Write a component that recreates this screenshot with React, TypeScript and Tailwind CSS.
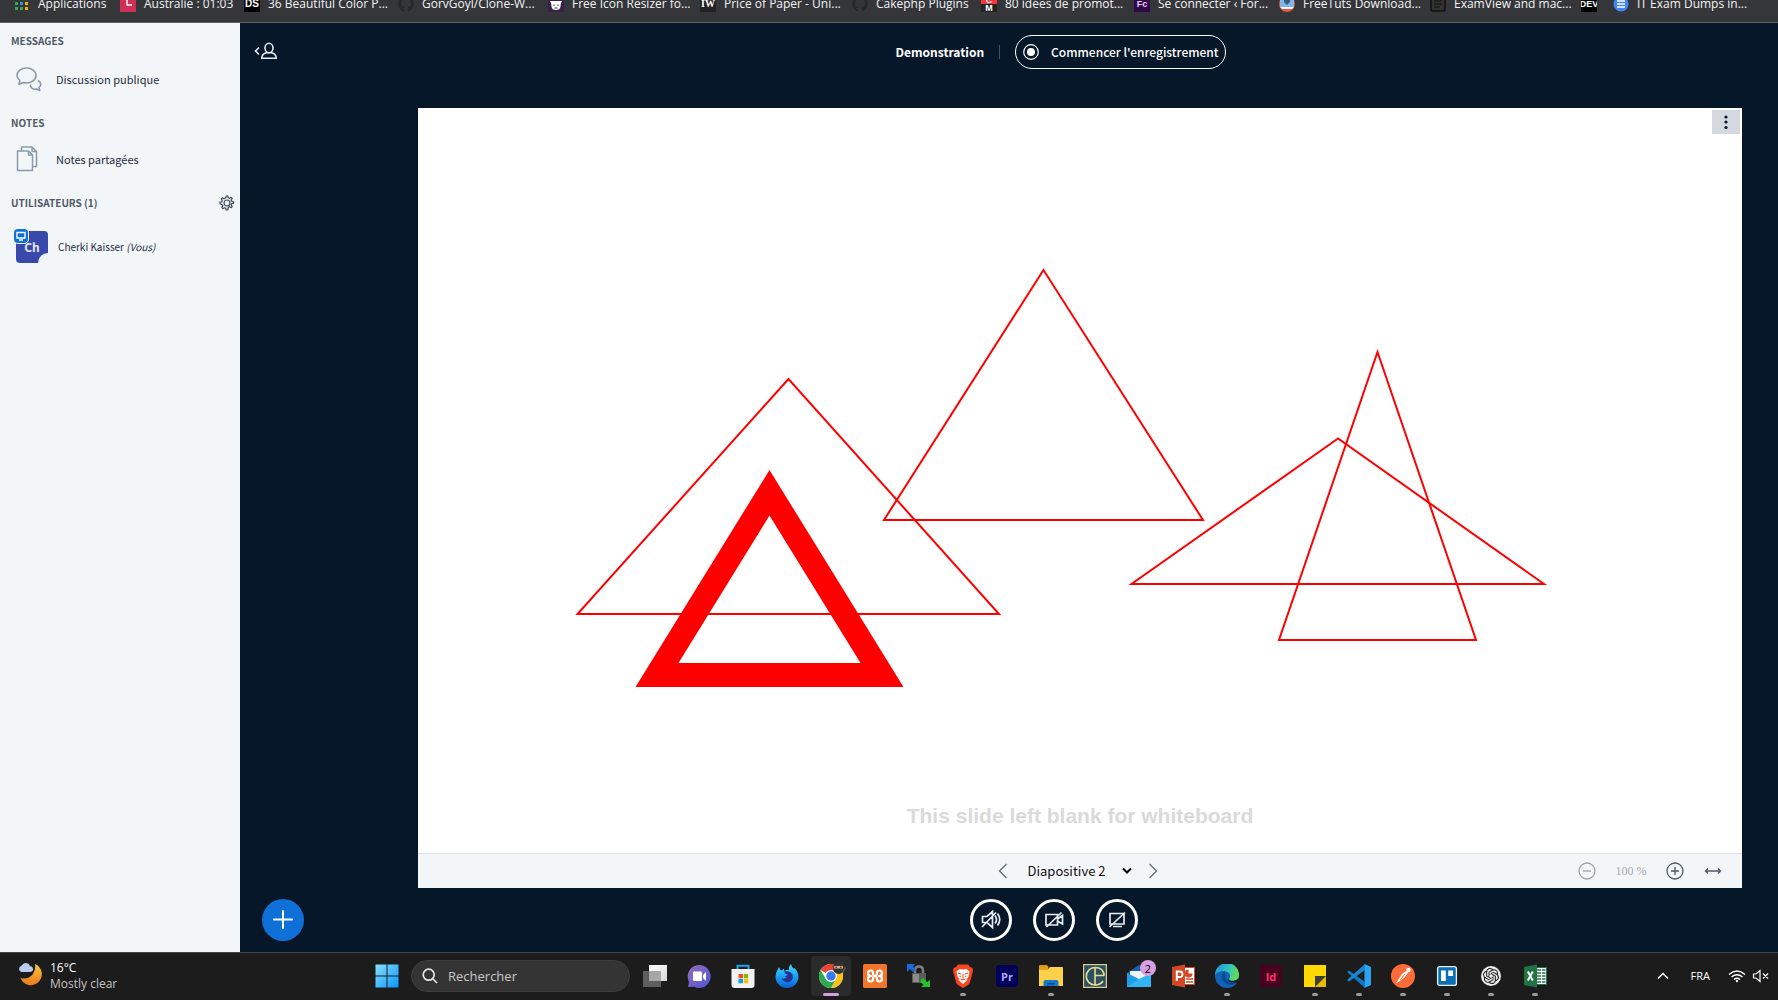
import type { ReactNode } from "react";
import { FaGithub } from "react-icons/fa";
import { SiOpenai } from "react-icons/si";

const UI = "font-['Noto_Sans_CJK_SC',sans-serif]";

const tile = "flex size-4 shrink-0 items-center justify-center overflow-hidden text-[9px] font-bold leading-none";

const AppsIcon = () => (
  <svg viewBox="0 0 16 16" className="size-4 shrink-0">
    {["#e94235", "#e94235", "#fbbc04", "#34a853", "#1a9cf0", "#f9ab00", "#34a853", "#34a853", "#f9ab00"].map((c, i) => (
      <rect key={i} x={(i % 3) * 5 + 1} y={Math.floor(i / 3) * 5 + 1} width="3" height="3" fill={c} />
    ))}
  </svg>
);

const bookmarks: { w: string; icon: ReactNode; label: string }[] = [
  { w: "w-[106px]", icon: <AppsIcon />, label: "Applications" },
  {
    w: "w-[124px]",
    icon: (
      <svg viewBox="0 0 16 16" className="size-4 shrink-0">
        <rect width="16" height="16" fill="#cf3057" />
        <path d="M7 2v7h5" fill="none" stroke="#fff" strokeWidth="1.4" />
      </svg>
    ),
    label: "Australie : 01:03",
  },
  { w: "w-[154px]", icon: <span className={tile + " bg-black text-[10px] text-white font-['Liberation_Sans',sans-serif]"}>DS</span>, label: "36 Beautiful Color P..." },
  { w: "w-[150px]", icon: <FaGithub className="size-4 shrink-0 text-[#24292e]" />, label: "GorvGoyl/Clone-W..." },
  {
    w: "w-[152px]",
    icon: (
      <svg viewBox="0 0 16 16" className="size-4 shrink-0">
        <rect width="16" height="16" fill="#36204a" />
        <path d="M2 5h12l-1 2-.6 4Q12 14 8 14T3.600 11L3 7z" fill="#fff" />
        <path d="M6 8.500v1.500M10 8.500v1.500M6.500 12h3" stroke="#36204a" />
      </svg>
    ),
    label: "Free Icon Resizer fo...",
  },
  { w: "w-[152px]", icon: <span className={tile + " bg-[#222] text-[10px] text-white font-['Liberation_Serif',serif]"}>IW</span>, label: "Price of Paper - Uni..." },
  { w: "w-[129px]", icon: <FaGithub className="size-4 shrink-0 text-[#24292e]" />, label: "Cakephp Plugins" },
  {
    w: "w-[153px]",
    icon: (
      <span className={tile + " flex-col font-['Liberation_Sans',sans-serif] text-white"}>
        <span className="flex h-2 w-4 items-center justify-center bg-[#f8353a]">C</span>
        <span className="flex h-2 w-4 items-center justify-center bg-[#222]">M</span>
      </span>
    ),
    label: "80 idées de promot...",
  },
  {
    w: "w-[145px]",
    icon: (
      <span className={tile + " bg-[#2e0a4a] text-[#eec9f5] font-['Liberation_Sans',sans-serif]"}>Fc</span>
    ),
    label: "Se connecter ‹ For...",
  },
  {
    w: "w-[151px]",
    icon: (
      <svg viewBox="0 0 16 16" className="size-4 shrink-0">
        <circle cx="8" cy="8" r="8" fill="#e2593a" />
        <path d="M1 2h14v9H1z" fill="#7db8e8" />
        <path d="M1 11h14l-2 2H3z" fill="#f5f5f5" />
        <path d="M5 2h6v4L8 9 5 6z" fill="#3d5a80" />
      </svg>
    ),
    label: "FreeTuts Download...",
  },
  {
    w: "w-[151px]",
    icon: (
      <svg viewBox="0 0 16 16" className="size-4 shrink-0">
        <rect x="1" y="1" width="14" height="14" rx="1" fill="#333" stroke="#111" strokeWidth="1.500" />
        <path d="M4 5h8M4 8h8M4 11h6" stroke="#111" strokeWidth="1.200" />
      </svg>
    ),
    label: "ExamView and mac...",
  },
  { w: "w-[32px]", icon: <span className={tile + " bg-black text-[8px] text-white font-['Liberation_Sans',sans-serif]"}>DEV</span>, label: "" },
  {
    w: "w-[140px]",
    icon: (
      <svg viewBox="0 0 16 16" className="size-4 shrink-0">
        <circle cx="8" cy="8" r="7.500" fill="#4285f4" />
        <path d="M4 5h8M4 8h8M4 11h8" stroke="#fff" strokeWidth="1.600" />
      </svg>
    ),
    label: "IT Exam Dumps in...",
  },
];

function BookmarksBar() {
  return (
    <nav aria-label="Favoris" className="flex h-[23px] shrink-0 items-start overflow-hidden border-b border-[#5f6063] bg-[#35363a] pl-[14px]">
      {bookmarks.map((b, i) => (
        <a key={i} href="#" className={"-mt-1 flex h-4 shrink-0 items-center gap-2 whitespace-nowrap text-xs leading-4 text-[#f1f3f4] " + b.w}>
          {b.icon}
          {b.label && <span className="font-['Open_Sans',sans-serif]">{b.label}</span>}
        </a>
      ))}
    </nav>
  );
}

function SectionTitle({ children }: { children: ReactNode }) {
  return <h2 className="text-[10px] font-bold leading-4 text-[#4e5a66]">{children}</h2>;
}

function Sidebar() {
  return (
    <aside className="flex w-60 shrink-0 flex-col bg-[#f3f6f9] px-[11px] pt-[10px] text-[#1f2d3d]">
      <SectionTitle>MESSAGES</SectionTitle>
      <button className="mt-[14px] flex h-8 items-center gap-[14px] pl-[5px] text-left text-[11px] leading-4">
        <svg viewBox="0 0 26 26" className="size-[26px]" fill="none" stroke="#8b9aaa" strokeWidth="1.600" strokeLinejoin="round">
          <path d="M10.500 2C15.500 2 20 5 20 9.500S15.500 17 10.500 17q-2 0-3.500-.5L3 18.500l.8-4Q1 12 1 9.500C1 5 5.500 2 10.500 2z" />
          <path d="M22 14.500c3.500 2 3.500 5 1 7l.8 3-3.300-1.500c-3 .8-6.500-1-6-4.500" />
        </svg>
        Discussion publique
      </button>
      <div className="mt-5">
        <SectionTitle>NOTES</SectionTitle>
      </div>
      <button className="mt-3 flex h-8 items-center gap-[14px] pl-[5px] text-left text-[11px] leading-4">
        <svg viewBox="0 0 26 26" className="size-[26px]" fill="none" stroke="#8b9aaa" strokeWidth="1.500" strokeLinejoin="round">
          <path d="M1.500 5h11l4 4v15.500h-15z" />
          <path d="M12.500 5v4h4M5.500 5V1h10.500l4.500 4.500v15h-4M16 1v4.500h4.500" />
        </svg>
        Notes partagées
      </button>
      <div className="mt-5 flex items-center justify-between">
        <SectionTitle>UTILISATEURS (1)</SectionTitle>
        <button aria-label="Gérer les utilisateurs" className="-mr-[6px]">
          <svg viewBox="0 0 16 16" className="size-4" fill="none" stroke="#3b4a59" strokeWidth="1.200" strokeLinejoin="round">
            <path d="M6.800 2.800 7.200 1h1.600l.4 1.800 1.300.5 1.600-1 1.100 1.100-1 1.600.5 1.300 1.800.4v1.600l-1.800.4-.5 1.300 1 1.600-1.100 1.100-1.600-1-1.300.5L8.800 15H7.200l-.4-1.800-1.300-.5-1.600 1-1.100-1.100 1-1.600-.5-1.300L1 8.800V7.200l1.800-.4.5-1.300-1-1.600 1.100-1.100 1.600 1z" />
            <circle cx="8" cy="8" r="3" />
          </svg>
        </button>
      </div>
      <div className="mt-5 flex items-center gap-[10px] pl-[5px]">
        <div className="relative flex size-8 items-center justify-center rounded bg-[#3949ab] text-[12px] font-bold leading-4 text-[#e8eaf8]">
          Ch
          <span className="absolute -left-[2px] -top-[2px] flex size-[14px] items-center justify-center rounded bg-[#0f70d7] ring-1 ring-[#f3f6f9]">
            <svg viewBox="0 0 12 12" className="size-3" fill="none" stroke="#fff" strokeWidth="1.400">
              <path d="M2 2.500h8v5.500H2zM4 10h4" />
            </svg>
          </span>
          <span className="absolute bottom-0 right-0 size-[10px] rounded-tl-full bg-[#f3f6f9]" />
        </div>
        <span className="text-[10px] leading-4">
          Cherki Kaisser <em>(Vous)</em>
        </span>
      </div>
    </aside>
  );
}

function TopBar() {
  return (
    <header className="grid h-[58px] grid-cols-[1fr_auto_1fr] items-center px-[14px] text-white">
      <button aria-label="Afficher les utilisateurs" className="justify-self-start pb-[2px]">
        <svg viewBox="0 0 24 18" className="h-[18px] w-6" fill="none" stroke="#e6ecf2" strokeWidth="1.600">
          <path d="M5 5.500 1.500 9 5 12.500" />
          <ellipse cx="15" cy="6" rx="4" ry="4.700" />
          <path d="M7.800 16.200q0-4.200 4.400-5.400h5.600q4.400 1.200 4.400 5.400z" />
        </svg>
      </button>
      <div className="flex items-center pl-[103px]">
        <h1 className="text-[12px] font-bold leading-5">Demonstration</h1>
        <span className="ml-[15px] mr-[15px] h-[14px] w-px bg-[#44515f]" />
        <button className="flex h-[34px] items-center gap-3 whitespace-nowrap rounded-full border border-white pl-[7px] pr-[6px] text-[12px] font-medium leading-5">
          <svg viewBox="0 0 16 16" className="size-4">
            <circle cx="8" cy="8" r="7.300" fill="none" stroke="#fff" strokeWidth="1.200" />
            <circle cx="8" cy="8" r="4" fill="#fff" />
          </svg>
          Commencer l'enregistrement
        </button>
      </div>
    </header>
  );
}

function Whiteboard() {
  return (
    <section className="relative flex flex-1 flex-col bg-white">
      <div className="relative flex flex-1 items-end justify-center pb-[25px]">
        <svg viewBox="0 0 1324 745" className="absolute inset-0 size-full" fill="none" stroke="#f00" strokeWidth="2">
          <path d="M370.500 271 159.500 506H581z" />
          <path d="M625.500 162 466 412H785z" />
          <path d="M920 330.500 713.500 476H1126z" />
          <path d="M959.500 244 861 532H1058z" />
          <path d="M351.500 362 217.500 579H485.500zM351.500 407.500 442.500 555H260.500z" fill="#f00" stroke="none" fillRule="evenodd" />
        </svg>
        <p className="font-['Liberation_Sans',sans-serif] text-[21px] font-bold leading-6 text-[#dadada]">This slide left blank for whiteboard</p>
      </div>
      <button aria-label="Options" className="absolute right-[2px] top-[2px] flex h-6 w-7 items-center justify-center bg-[#d4d9e0]">
        <svg viewBox="0 0 4 16" className="h-4 w-1" fill="#06172a">
          <circle cx="2" cy="3" r="1.600" />
          <circle cx="2" cy="8" r="1.600" />
          <circle cx="2" cy="13.500" r="1.600" />
        </svg>
      </button>
      <div className="grid h-[35px] grid-cols-[1fr_auto_1fr] items-center border-t border-[#dfe4e9] bg-[#f3f6f9]">
        <div className="col-start-2 flex items-center pr-[5px]">
          <button aria-label="Diapositive précédente">
            <svg viewBox="0 0 10 16" className="h-4 w-[10px]" fill="none" stroke="#5f6d7a" strokeWidth="1.300"><path d="M8.500 1 1.500 8l7 7" /></svg>
          </button>
          <label className="relative ml-5 mr-4 flex items-center">
            <select aria-label="Diapositive" className="w-[104px] appearance-none bg-transparent text-[13px] leading-5 text-[#111] outline-none">
              <option>Diapositive 2</option>
            </select>
            <svg viewBox="0 0 10 8" className="pointer-events-none absolute right-0 h-2 w-[10px]" fill="none" stroke="#000" strokeWidth="2"><path d="m1 1.500 4 4 4-4" /></svg>
          </label>
          <button aria-label="Diapositive suivante">
            <svg viewBox="0 0 10 16" className="h-4 w-[10px]" fill="none" stroke="#5f6d7a" strokeWidth="1.300"><path d="m1.500 1 7 7-7 7" /></svg>
          </button>
        </div>
        <div className="flex items-center justify-end pr-5">
          <button aria-label="Zoom arrière">
            <svg viewBox="0 0 18 18" className="size-[18px]" fill="none" stroke="#9aa2ab" strokeWidth="1.300"><circle cx="9" cy="9" r="8" /><path d="M5 9h8" /></svg>
          </button>
          <span className="w-[70px] text-center font-['Liberation_Serif',serif] text-[12px] leading-4 text-[#a3a9b0]">100 %</span>
          <button aria-label="Zoom avant">
            <svg viewBox="0 0 18 18" className="size-[18px]" fill="none" stroke="#4e5a66" strokeWidth="1.300"><circle cx="9" cy="9" r="8" /><path d="M5 9h8M9 5v8" /></svg>
          </button>
          <button aria-label="Ajuster à la largeur" className="ml-5">
            <svg viewBox="0 0 18 10" className="h-[10px] w-[18px]" fill="none" stroke="#4e5a66" strokeWidth="1.400"><path d="M1.500 5h15M4 2.500 1.500 5 4 7.500M14 2.500 16.500 5 14 7.500" /></svg>
          </button>
        </div>
      </div>
    </section>
  );
}

function RoundButton({ label, children }: { label: string; children: ReactNode }) {
  return (
    <button aria-label={label} className="flex size-[42px] items-center justify-center rounded-full border-[3px] border-white">
      <svg viewBox="0 0 20 20" className="size-5" fill="none" stroke="#e6ecf2" strokeWidth="1.700">{children}</svg>
    </button>
  );
}

function ActionsBar() {
  return (
    <footer className="grid h-16 grid-cols-[1fr_auto_1fr] items-center pl-[22px] pr-[22px]">
      <button aria-label="Actions" className="flex size-[42px] items-center justify-center rounded-full bg-[#0f70d7]">
        <svg viewBox="0 0 20 20" className="size-5" stroke="#fff" strokeWidth="2" strokeLinecap="round"><path d="M10 1v17M1 9.500h18" /></svg>
      </button>
      <div className="flex gap-[21px] pl-[90px]">
        <RoundButton label="Rejoindre l'audio">
          <path d="M1.500 6.500H6L11.500 1.500v16L6 12.500H1.500zM14 5.500q3 4 0 8M16.500 3.500q4.500 6 0 12M1 17 15 2.500" />
        </RoundButton>
        <RoundButton label="Partager la webcam">
          <path d="M2 4.500h11.500v10.500H2zM13.500 9 18.500 5.500v8.500L13.500 11M2.500 17 17.500 2.500" />
        </RoundButton>
        <RoundButton label="Partager l'écran">
          <path d="M3 3.500h14v10.500H3zM6 16.500h9M2.500 17 18 2.500" />
        </RoundButton>
      </div>
    </footer>
  );
}

const Badge = ({ children, cls }: { children: ReactNode; cls: string }) => (
  <span className={"flex size-[22px] items-center justify-center rounded font-['Open_Sans',sans-serif] text-[11px] font-bold leading-none " + cls}>{children}</span>
);

const Svg = ({ children }: { children: ReactNode }) => (
  <svg viewBox="0 0 24 24" className="size-6">{children}</svg>
);

const ChromeIcon = () => (
  <Svg>
    <circle cx="12" cy="12" r="12" fill="#fff" />
    <path d="M12 12 1.600 6A12 12 0 0 1 22.400 6H12z" fill="#ea4335" />
    <path d="M22.400 6A12 12 0 0 1 12 24l5.200-9L12 6z" fill="#fbc116" />
    <path d="M12 24A12 12 0 0 1 1.600 6l5.200 9L12 18l5-3z" fill="#2da94f" />
    <circle cx="12" cy="12" r="6" fill="#fff" />
    <circle cx="12" cy="12" r="4.700" fill="#3a7af0" />
  </Svg>
);

const apps: { name: string; state?: "run" | "active"; icon: ReactNode }[] = [
  { name: "Vue des tâches", icon: <Svg><defs><linearGradient id="tv" x2="1" y2="1"><stop stopColor="#fff" /><stop offset="1" stopColor="#d8d8d8" /></linearGradient></defs><path d="M6 1h18v16H6z" fill="url(#tv)" /><path d="M0 7h18v16H0z" fill="#5e5e5e" /><path d="M6 7h12v10H6z" fill="#a6a6a6" /></Svg> },
  { name: "Conversation", icon: <Svg><defs><linearGradient id="ct" x2="1" y2="1"><stop stopColor="#9a6fb8" /><stop offset="1" stopColor="#4b53d8" /></linearGradient></defs><path d="M12 1a11.500 11.500 0 1 1-5 21.800L1 23l1-5A11.500 11.500 0 0 1 12 1z" fill="url(#ct)" /><rect x="6" y="7.500" width="9" height="9.500" rx="1" fill="#fff" /><path d="m16 11 3-3v9l-3-3z" fill="#fff" /></Svg> },
  { name: "Microsoft Store", icon: <Svg><path d="M6.500 6V1.800h11V6" fill="none" stroke="#1ba1e8" strokeWidth="2" /><path d="M.500 5h23v16q0 3-3 3h-17q-3 0-3-3z" fill="#f2f2f2" /><path d="M7.500 10H12v4.300H7.500z" fill="#f25022" /><path d="M12.800 10h4.300v4.300h-4.300z" fill="#7fba00" /><path d="M7.500 15H12v4.300H7.500z" fill="#00a4ef" /><path d="M12.800 15h4.300v4.300h-4.300z" fill="#ffb900" /></Svg> },
  { name: "Firefox Developer Edition", icon: <Svg><defs><linearGradient id="ff" x2="0" y2="1"><stop stopColor="#3fdcff" /><stop offset=".5" stopColor="#1aa2f8" /><stop offset="1" stopColor="#0a5fd0" /></linearGradient></defs><path d="M2.500 6 4 3l1.500 3 1.500.3L9 4.500V7q3-1.500 5-1.200-.5-3.500 2-5.500.5 3 3 4.500l.5-.8Q23.500 8 23.500 12.800A11.500 11.200 0 0 1 .500 12.800Q.500 9 2.500 6z" fill="url(#ff)" /><path d="M9 7.500q6-1.500 8.500 3 1.500 5-3 7.500-6 1-8-4 3 1.500 5.500-.5-2-.5-2-1.500 2.500 0 2.500-1.500-2.500-.5-3.500-3z" fill="#29308f" /></Svg> },
  { name: "Google Chrome", state: "active", icon: <span className="relative"><ChromeIcon /><svg viewBox="0 0 14 14" className="absolute -right-[3px] -top-[3px] size-[14px]"><path d="M1 6q0-5 5.500-5T12 6q0 7-5.500 7T1 6z" fill="#333" /><path d="M2 5h9v2.500H2z" fill="#e2aa88" /><path d="M3.500 6.200h1.500M8 6.200h1.500" stroke="#111" /><path d="m11 11 3-5" stroke="#555" strokeWidth="1.500" /></svg></span> },
  { name: "XAMPP", icon: <Svg><rect width="24" height="24" rx="1.500" fill="#f0762b" /><path d="M8 6.500q-3 0-3 2.700T8 12q-3 0-3 2.800t3 2.700q2 0 2-2.500 0-3 2-3t2 3q0 2.500 2 2.500 3 0 3-2.700T16 12q3 0 3-2.800t-3-2.700q-2 0-2 2.500 0 3-2 3t-2-3q0-2.500-2-2.500z" fill="none" stroke="#fff" strokeWidth="2.200" strokeLinejoin="round" /></Svg> },
  { name: "WinSCP", icon: <Svg><path d="M8 10V6.500q0-4 4-4t4 4V10" fill="none" stroke="#7d7d7d" strokeWidth="2.500" /><rect x="5" y="9" width="14" height="10" rx="1" fill="#5b5b5b" /><rect x="6" y="10" width="6" height="8" fill="#8b8b8b" /><path d="M0 0h8L6 2.500 9 6 6 8 3 5 0 8z" fill="#1667e0" /><path d="m14 15 2-1 4 4 3-2v7h-9l2.500-2-3-3z" fill="#25c22c" /></Svg> },
  { name: "Brave", state: "run", icon: <Svg><path d="M7 .500h10l2 2.500 2.500 1 .5 3-1 3.500-2 7.500q-.5 2-2 3L12 24l-5-3q-1.500-1-2-3l-2-7.500L2 7l.5-3L5 3z" fill="#fb4420" /><path d="m5.500 7.500 3-2.500 3.500.6L15.500 5l3 2.500-1 5-2 3 1 .5-4.500 4-4.500-4 1-.5-2-3z" fill="#fff" /><path d="m7 9 3 1M17 9l-3 1M12 10v4.500M9.500 15l2.500 1 2.500-1M8.500 12l1.500.500M15.500 12l-1.500.500" stroke="#fb4420" strokeWidth="1.100" fill="none" /></Svg> },
  { name: "Premiere Pro", icon: <Badge cls="bg-[#00005b] text-[#b0a8ff]">Pr</Badge> },
  { name: "Explorateur", state: "run", icon: <Svg><path d="M0 2q0-1 1-1h7l2 2.500H0z" fill="#d99a10" /><path d="M0 5h9l2-2h12q1 0 1 1v18H0z" fill="#ffd04a" /><path d="M0 3h9v3H0z" fill="#e2a51a" /><path d="M4.500 22v-4q0-2 2-2h11q2 0 2 2v4z" fill="#1979c9" /><path d="M8 19h8v1.500H8z" fill="#0b4f8e" /></Svg> },
  { name: "Calligraphie", icon: <Svg><rect x=".600" y=".600" width="22.800" height="22.800" fill="#2c5060" stroke="#d9cf8a" strokeWidth="1.200" /><path d="M12 3.500a8.700 8.700 0 0 0 0 17.500M12 11.500h9.200M12 3v18M12 3.500q8.500 0 9.200 8M12 21q5.500 0 8-4" fill="none" stroke="#e8dd98" strokeWidth="1.600" /></Svg> },
  { name: "Courrier", icon: <span className="relative"><svg viewBox="0 0 24 24" className="size-6"><path d="M0 9 12 1l12 8v4H0z" fill="#1660b5" /><path d="M3 7h18v8l-9 4-9-4z" fill="#f3f3f3" /><path d="M0 9v14h24L12 15z" fill="#1f9ee8" /><path d="M24 9v14H0L12 15z" fill="#32b6f3" /></svg><span className="absolute -right-[5px] -top-1 flex size-4 items-center justify-center rounded-full bg-[#d8a0e2] font-['Open_Sans',sans-serif] text-[11px] leading-none text-black">2</span></span> },
  { name: "PowerPoint", icon: <Svg><path d="M13 3.500h10.500v17H13z" fill="#fff" stroke="#d24726" /><path d="M15 15h7M15 18h7" stroke="#d24726" strokeWidth="1.500" /><path d="M17.500 5.500v4h4a4 4 0 1 1-4-4z" fill="#d24726" /><path d="M1 3 14 .500v23L1 21z" fill="#d24726" /><path d="M5.800 17V7.500h3q2.700 0 2.700 2.800T8.600 13H6" stroke="#fff" strokeWidth="2" fill="none" /></Svg> },
  { name: "Edge", state: "run", icon: <Svg><defs><linearGradient id="eg" x2="1" y2=".3"><stop stopColor="#1a8fd8" /><stop offset=".6" stopColor="#2fc3c4" /><stop offset="1" stopColor="#66d85a" /></linearGradient></defs><circle cx="12" cy="12" r="12" fill="#1262b8" /><path d="M0 11A12 12 0 0 1 24 11q0 5-5 5.500-5 .5-5-1.500 1.500-2 1-4-1-3.500-6-4Q3 7 0 11z" fill="url(#eg)" /><path d="M9 7q-3 3-2 7.500 2 6 9 6.500 3.500-.5 6-3.500-4 1.500-8 0-5-2.500-3.500-7.500Q9 9 9 7z" fill="#0c4a94" /><path d="M14 15q0 2 3.500 2 4 0 5.800-2.500L23 19l-4-.5q-5 0-6-3z" fill="#1c1c1c" /></Svg> },
  { name: "InDesign", icon: <Badge cls="bg-[#49021f] text-[#ff3366]">Id</Badge> },
  { name: "Pense-bêtes", state: "run", icon: <Svg><path d="M1 1h22v11L12 23H1z" fill="#ffd800" /><path d="M12 12h11v11H12z" fill="#e8bd00" /><path d="M12 12h11L12 23z" fill="#3c3c3c" /></Svg> },
  { name: "Visual Studio Code", state: "run", icon: <Svg><path d="M17.500 0 24 3v18l-6.500 3z" fill="#2aa4ee" /><path d="M0 8l2-1.500L18 18v6z" fill="#1179c4" /><path d="M0 16l2 1.500L18 6V0z" fill="#1a86d2" /></Svg> },
  { name: "Postman", state: "run", icon: <Svg><circle cx="12" cy="12" r="12" fill="#ff6c37" /><path d="m5 19 6-9 4-3 2 1.500-3 4.500-8 6z" fill="#fff" /><circle cx="17.500" cy="6" r="2.200" fill="#fff" /><path d="m9 16 5-6" stroke="#ff6c37" /></Svg> },
  { name: "Trello", state: "run", icon: <Svg><rect x="2.600" y="2.600" width="18.800" height="18.800" rx="2" fill="#0b6fb8" stroke="#e8f1f8" strokeWidth="1.300" /><path d="M6 6.500h4.800v10.500H6zM13.200 6.500H18v5.500h-4.800z" fill="#fff" /></Svg> },
  { name: "ChatGPT", state: "run", icon: <span className="flex size-5 items-center justify-center rounded-full bg-[#ececec]"><SiOpenai className="size-4 text-[#222]" /></span> },
  { name: "Excel", state: "run", icon: <Svg><path d="M13 3.500h10.500v17H13z" fill="#fff" stroke="#217346" /><path d="M14 6h4M14 9h4M14 12h4M14 15h4M14 18h4M19 6h3.500M19 9h3.500M19 12h3.500M19 15h3.500M19 18h3.500" stroke="#217346" strokeWidth="1.500" /><path d="M1 3 14 .500v23L1 21z" fill="#217346" /><path d="m4.800 7.500 5 9M9.800 7.500l-5 9" stroke="#fff" strokeWidth="1.900" /></Svg> },
];

function Taskbar() {
  return (
    <div className="flex h-12 shrink-0 items-center border-t border-[#444] bg-[#1c1c1c] pb-px font-['Open_Sans',sans-serif] text-[12px] text-white">
      <div className="flex flex-1 items-center gap-2 pl-[18px]">
        <svg viewBox="0 0 24 24" className="mb-1 size-6">
          <defs><linearGradient id="mn" x2="0" y2="1"><stop stopColor="#f8c83c" /><stop offset="1" stopColor="#ee7a1c" /></linearGradient></defs>
          <path d="M17 2a11 11 0 1 1-14.500 14Q10 18 15 12q3-5 2-10z" fill="url(#mn)" />
          <path d="M3.500 10a3.200 3.200 0 0 1 0-6.200Q5 .800 8 1t4 3q3 .5 3 3.200T12 10z" fill="#b9cbf0" />
        </svg>
        <p className="leading-4">16°C<br /><span className="text-[#c4c4c4]">Mostly clear</span></p>
      </div>
      <button aria-label="Démarrer" className="mr-3">
        <svg viewBox="0 0 24 24" className="size-6">
          <defs><linearGradient id="wn" gradientUnits="userSpaceOnUse" x1="0" y1="0" x2="24" y2="24"><stop stopColor="#8be0fd" /><stop offset="1" stopColor="#0594ff" /></linearGradient></defs>
          <path d="M.500.500h11v11H.500zM12.500.500h11v11h-11zM.500 12.500h11v11H.500zM12.500 12.500h11v11h-11z" fill="url(#wn)" />
        </svg>
      </button>
      <label className="mr-[3px] flex h-8 w-[219px] items-center gap-[10px] rounded-full border border-[#3d3d3d] bg-[#343434] pl-[10px]">
        <svg viewBox="0 0 16 16" className="size-4 shrink-0" fill="none" stroke="#e4e4e4" strokeWidth="1.700"><circle cx="6.700" cy="6.700" r="5.500" /><path d="m11 11 4 4" /></svg>
        <input aria-label="Rechercher" placeholder="Rechercher" className="w-32 min-w-0 bg-transparent text-[13px] leading-4 outline-none placeholder:text-[#c8c8c8]" />
      </label>
      <div className="flex">
        {apps.map((a) => (
          <button key={a.name} aria-label={a.name} className={"relative mx-[2px] flex h-10 w-10 items-center justify-center rounded " + (a.state === "active" ? "bg-[#2b2b2b]" : "")}>
            {a.icon}
            {a.state === "run" && <span className="absolute bottom-0 h-[3px] w-[6px] rounded-full bg-[#9a9a9a]" />}
            {a.state === "active" && <span className="absolute bottom-0 h-[3px] w-4 rounded-full bg-[#d8a0e2]" />}
          </button>
        ))}
      </div>
      <div className="flex w-[221px] items-center justify-end gap-[6px] pr-2">
        <svg viewBox="0 0 12 8" className="mr-4 h-2 w-3" fill="none" stroke="#fff" strokeWidth="1.500"><path d="m1 6.500 5-5 5 5" /></svg>
        <span className="mr-3 pt-px text-[11px]">FRA</span>
        <svg viewBox="0 0 18 14" className="h-[14px] w-[18px]" fill="none" stroke="#fff" strokeWidth="1.400"><path d="M1 5.500q8-7 16 0M3.500 8q5.500-4.500 11 0M6 10.500q3-2.500 6 0" /><circle cx="9" cy="12" r="1.200" fill="#fff" stroke="none" /></svg>
        <svg viewBox="0 0 18 14" className="h-[14px] w-[18px]" fill="none" stroke="#fff" strokeWidth="1.200"><path d="M1.500 5h2.500L8 1.500v11L4 9H1.500zM11 4.500l5 5M16 4.500l-5 5" /></svg>
      </div>
    </div>
  );
}

export default function App() {
  return (
    <div className={"flex h-screen flex-col overflow-hidden bg-[#06172a] " + UI}>
      <BookmarksBar />
      <div className="flex min-h-0 flex-1">
        <Sidebar />
        <main className="flex min-w-0 flex-1 flex-col">
          <TopBar />
          <div className="flex min-h-0 flex-1 pl-[178px] pr-9 pt-[27px]">
            <Whiteboard />
          </div>
          <ActionsBar />
        </main>
      </div>
      <Taskbar />
    </div>
  );
}
